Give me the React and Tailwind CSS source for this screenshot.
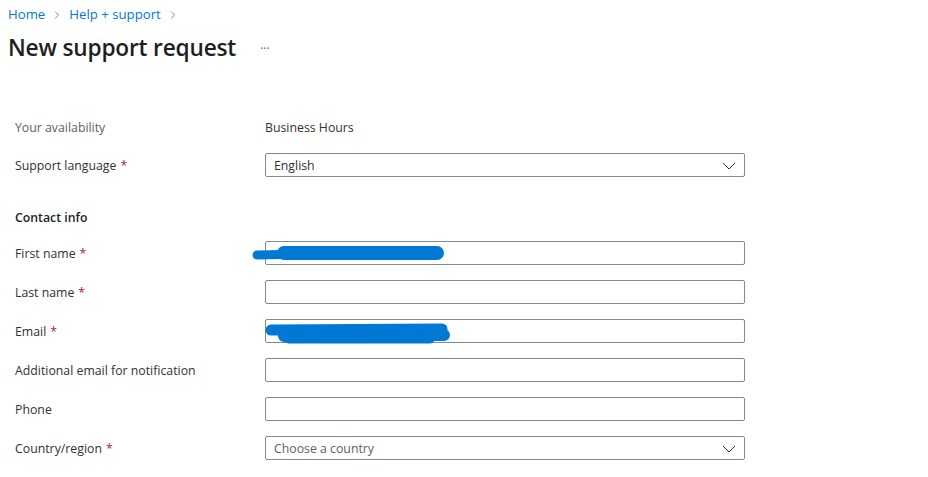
import { ChevronRight } from "lucide-react"

const font = { fontFamily: '"Segoe UI", "Open Sans", "Noto Sans", sans-serif' }

const Req = () => <span className="ml-1 text-[#a4262c]">*</span>

const Chevron = () => (
  <svg width="14" height="8" viewBox="0 0 14 8" className="absolute right-[8px] top-[8px]">
    <path d="M1 1 L7 7 L13 1" fill="none" stroke="#323130" strokeWidth="1" />
  </svg>
)

const Scribble = ({ strokes }) => (
  <svg width="200" height="26" className="absolute left-[-12px] top-0 overflow-visible pointer-events-none">
    {strokes.map((s, i) => (
      <path key={i} d={s.d} fill="none" stroke="#0078d4" strokeWidth={s.w} strokeLinecap="round" />
    ))}
  </svg>
)

const Row = ({ label, required, children, muted }) => (
  <div className="flex items-center h-6">
    <div className={"w-[250px] shrink-0 pt-[2px] " + (muted ? "text-[#605e5c]" : "text-[#323130]")}>
      {label}
      {required && <Req />}
    </div>
    {children}
  </div>
)

const Input = ({ scribble }) => (
  <div className="relative w-[480px] h-6 border border-[#8a8886] rounded-[2px] bg-white">
    {scribble && <Scribble strokes={scribble} />}
  </div>
)

const Select = ({ value, placeholder }) => (
  <div className="relative w-[480px] h-6 border border-[#8a8886] rounded-[2px] bg-white flex items-center px-[8px] pt-[2px]">
    <span className={placeholder ? "text-[#605e5c]" : "text-[#323130]"}>{value}</span>
    <Chevron />
  </div>
)

export default function App() {
  return (
    <div className="w-[928px] h-[477px] bg-white overflow-hidden text-[12.3px]" style={font}>
      <div className="flex items-center h-[28px] pl-[8px] pt-[2px] text-[#0078d4] text-[13.2px]">
        <span>Home</span>
        <ChevronRight className="w-[12px] h-[12px] mx-[6px] text-[#605e5c]" strokeWidth={1.5} />
        <span>Help + support</span>
        <ChevronRight className="w-[12px] h-[12px] mx-[6px] text-[#605e5c]" strokeWidth={1.5} />
      </div>
      <div className="flex items-center h-[40px] pl-[8px]">
        <h1 className="text-[22.7px] font-semibold text-[#201f1e] tracking-[-0.2px]">New support request</h1>
        <span className="ml-[24px] text-[#605e5c] text-[12px] mt-[2px]">···</span>
      </div>

      <div className="pl-[15px] pt-[47px] flex flex-col">
        <Row label="Your availability" muted>
          <span className="text-[#323130] pt-[2px]">Business Hours</span>
        </Row>
        <div className="mt-[14px]">
          <Row label="Support language" required>
            <Select value="English" />
          </Row>
        </div>
        <div className="mt-[30px] font-semibold text-[#201f1e] h-[20px] flex items-center pt-[2px]">Contact info</div>
        <div className="mt-[14px] flex flex-col gap-[15px]">
          <Row label="First name" required>
            <Input
              scribble={[
                { d: "M3 13 L52 12", w: 9 },
                { d: "M30 11 L183 11", w: 14 },
              ]}
            />
          </Row>
          <Row label="Last name" required>
            <Input />
          </Row>
          <Row label="Email" required>
            <Input
              scribble={[
                { d: "M17 10 L188 9", w: 11 },
                { d: "M30 16 L190 15", w: 12 },
                { d: "M35 19 L176 19", w: 9 },
              ]}
            />
          </Row>
          <Row label="Additional email for notification">
            <Input />
          </Row>
          <Row label="Phone">
            <Input />
          </Row>
          <Row label="Country/region" required>
            <Select value="Choose a country" placeholder />
          </Row>
        </div>
      </div>
    </div>
  )
}
